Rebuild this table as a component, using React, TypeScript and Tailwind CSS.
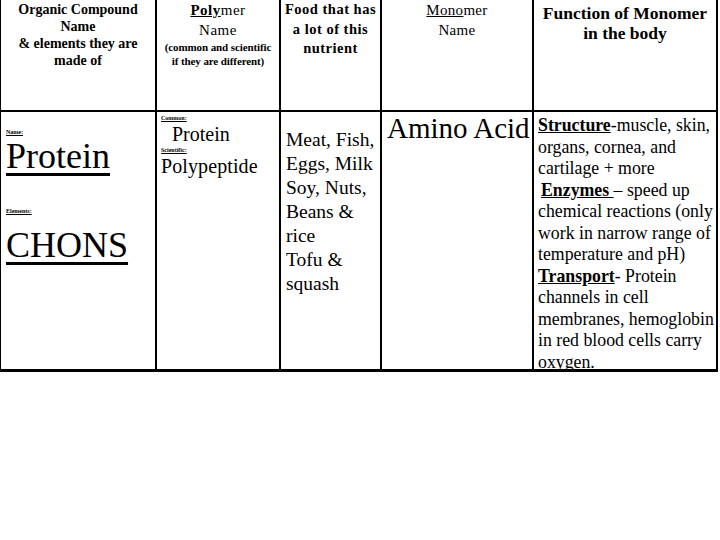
import React from 'react';

const serif = { fontFamily: '"Liberation Serif", "Times New Roman", serif' };

function Tiny({ children }: { children: React.ReactNode }) {
  return <div className="text-[6px] leading-[8px] font-bold underline">{children}</div>;
}

export default function App() {
  return (
    <div className="w-[720px] h-[540px] bg-white text-black" style={serif}>
      <div className="w-[718px] border-l border-black">
        {/* header row */}
        <div className="flex h-[112px] border-b-2 border-black">
          <div className="w-[156px] border-r-2 border-black text-center font-bold text-[14px] leading-[17px] pt-[1px]">
            Organic Compound
            <br />
            Name
            <br />
            &amp; elements they are
            <br />
            made of
          </div>
          <div className="w-[124px] border-r-2 border-black text-center">
            <div className="text-[15px] leading-[20px] tracking-[0.5px]">
              <span className="underline font-bold">Poly</span>mer
            </div>
            <div className="text-[15px] leading-[20px] tracking-[0.5px]">Name</div>
            <div className="font-bold text-[11px] leading-[14px] tracking-[-0.1px]">
              (common and scientific
              <br />
              if they are different)
            </div>
          </div>
          <div className="w-[101px] border-r-2 border-black text-center font-bold text-[14.5px] leading-[19.5px] tracking-[0.5px]">
            Food that has
            <br />a lot of this
            <br />
            nutrient
          </div>
          <div className="w-[152px] border-r-2 border-black text-center text-[15px] leading-[20px] tracking-[0.3px]">
            <span className="underline">Mono</span>mer
            <br />
            Name
          </div>
          <div className="w-[184px] border-r-2 border-black text-center font-bold text-[17.5px] leading-[20px] pt-[3px]">
            Function of Monomer
            <br />
            in the body
          </div>
        </div>

        {/* body row */}
        <div className="flex h-[260px] border-b-[3px] border-black">
          <div className="w-[156px] border-r-2 border-black pl-[5px] pt-[16px]">
            <Tiny>Name:</Tiny>
            <div className="text-[36px] leading-[40px] underline decoration-[3px] underline-offset-[5px]">
              Protein
            </div>
            <div className="mt-[31px]">
              <Tiny>Elements:</Tiny>
            </div>
            <div className="text-[36px] leading-[40px] underline decoration-[3px] underline-offset-[5px] mt-[10px]">
              CHONS
            </div>
          </div>
          <div className="w-[124px] border-r-2 border-black pl-[4px] pt-[2px]">
            <Tiny>Common:</Tiny>
            <div className="text-[20px] leading-[24px] pl-[11px]">Protein</div>
            <Tiny>Scientific:</Tiny>
            <div className="text-[20px] leading-[24px] tracking-[0.1px]">Polypeptide</div>
          </div>
          <div className="w-[101px] border-r-2 border-black pl-[5px] pt-[16px] text-[19.5px] leading-[24px] whitespace-nowrap">
            Meat, Fish,
            <br />
            Eggs, Milk
            <br />
            Soy, Nuts,
            <br />
            Beans &amp;
            <br />
            rice
            <br />
            Tofu &amp;
            <br />
            squash
          </div>
          <div className="w-[152px] border-r-2 border-black pl-[5px] text-[29px] leading-[32px] whitespace-nowrap">
            Amino Acid
          </div>
          <div className="w-[184px] border-r-2 border-black pl-[4px] pt-[3px] text-[17.8px] leading-[21.5px] whitespace-nowrap">
            <div>
              <span className="font-bold underline">Structure</span>-muscle, skin,
            </div>
            <div>organs, cornea, and</div>
            <div>cartilage + more</div>
            <div>
              <span className="font-bold underline pl-[3px]">Enzymes </span> – speed up
            </div>
            <div>chemical reactions (only</div>
            <div>work in narrow range of</div>
            <div>temperature and pH)</div>
            <div>
              <span className="font-bold underline">Transport</span>- Protein
            </div>
            <div>channels in cell</div>
            <div>membranes, hemoglobin</div>
            <div>in red blood cells carry</div>
            <div>oxygen.</div>
          </div>
        </div>
      </div>
    </div>
  );
}
